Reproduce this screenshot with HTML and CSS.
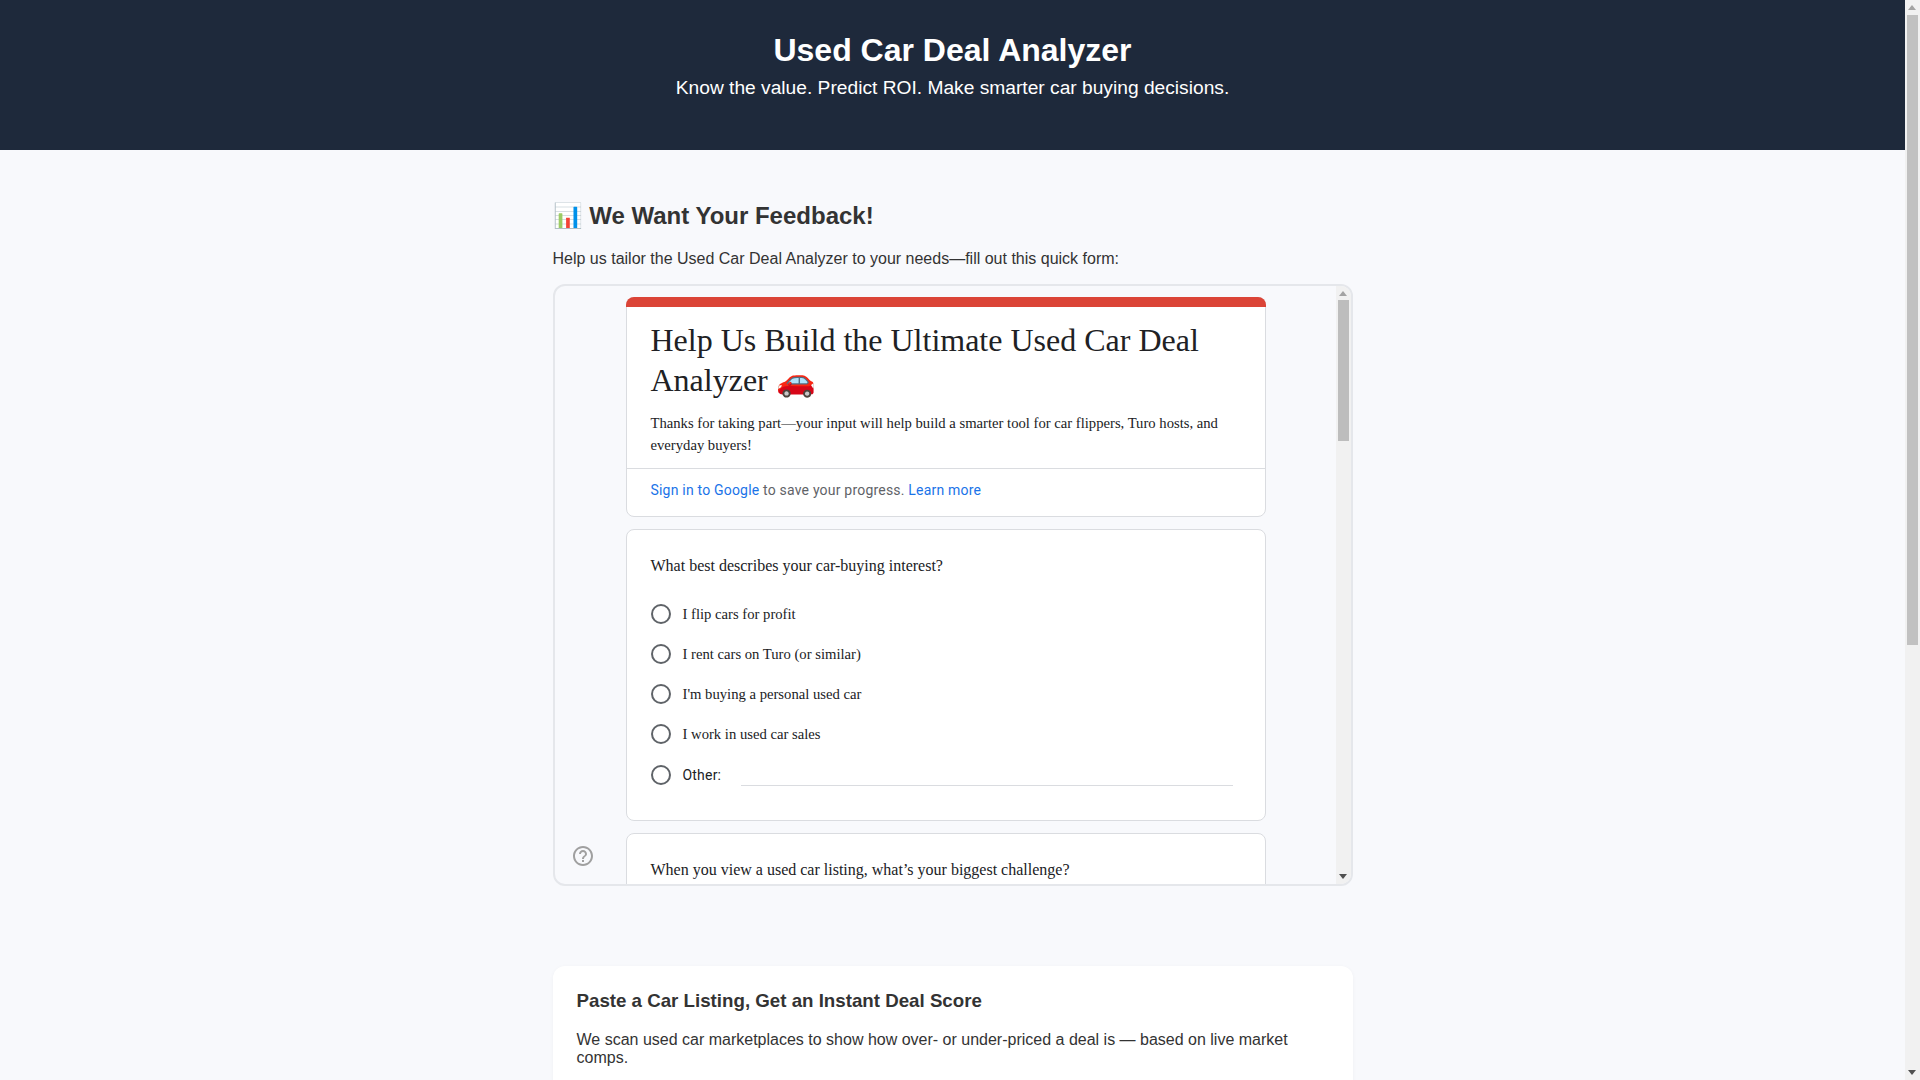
FILE: index.html
```html
<!DOCTYPE html>
<html lang="en">
<head>
  <meta charset="UTF-8">
  <title>Used Car Deal Analyzer</title>
  <link rel="stylesheet" href="styles.css">
</head>
<body>

<header class="hero">
  <h1>Used Car Deal Analyzer</h1>
  <p>Know the value. Predict ROI. Make smarter car buying decisions.</p>
</header>

<main class="content">
  <section class="feedback">
    <h2>📊 We Want Your Feedback!</h2>
    <p>Help us tailor the Used Car Deal Analyzer to your needs—fill out this quick form:</p>

    <div class="form-frame">
      <div class="form-scroll">
        <div class="form-card form-head">
          <div class="form-strip"></div>
          <div class="form-intro">
            <h3>Help Us Build the Ultimate Used Car Deal Analyzer 🚗</h3>
            <p>Thanks for taking part—your input will help build a smarter tool for car flippers, Turo hosts, and everyday buyers!</p>
          </div>
          <div class="form-signin"><a href="#">Sign in to Google</a> to save your progress. <a href="#">Learn more</a></div>
        </div>

        <div class="form-card question">
          <div class="q-title">What best describes your car-buying interest?</div>
          <label class="option"><span class="radio"></span>I flip cars for profit</label>
          <label class="option"><span class="radio"></span>I rent cars on Turo (or similar)</label>
          <label class="option"><span class="radio"></span>I'm buying a personal used car</label>
          <label class="option"><span class="radio"></span>I work in used car sales</label>
          <label class="option option-other"><span class="radio"></span><span class="other-label">Other:</span><span class="other-line"></span></label>
        </div>

        <div class="form-card question question-long">
          <div class="q-title">When you view a used car listing, what’s your biggest challenge?</div>
        </div>
      </div>

      <svg class="help-icon" viewBox="0 0 24 24" width="24" height="24"><path d="M11 18h2v-2h-2v2zm1-16C6.48 2 2 6.48 2 12s4.48 10 10 10 10-4.48 10-10S17.52 2 12 2zm0 18c-4.41 0-8-3.59-8-8s3.59-8 8-8 8 3.59 8 8-3.59 8-8 8zm0-14c-2.21 0-4 1.79-4 4h2c0-1.1.9-2 2-2s2 .9 2 2c0 2-3 1.75-3 5h2c0-2.25 3-2.5 3-5 0-2.21-1.79-4-4-4z"/></svg>

      <div class="scrollbar frame-bar">
        <span class="arrow-up"></span>
        <span class="thumb"></span>
        <span class="arrow-down"></span>
      </div>
    </div>
  </section>

  <section class="score-card">
    <h3>Paste a Car Listing, Get an Instant Deal Score</h3>
    <p>We scan used car marketplaces to show how over- or under-priced a deal is — based on live market comps.</p>
  </section>
</main>

<div class="scrollbar page-bar">
  <span class="arrow-up"></span>
  <span class="thumb"></span>
  <span class="arrow-down"></span>
</div>

</body>
</html>
```

FILE: styles.css
```css
* { box-sizing: border-box; }
body {
  margin: 0;
  padding-right: 15px;
  font-family: "Liberation Sans", Arial, sans-serif;
  background-color: #f8f9fc;
  color: #333;
}

.hero {
  height: 150px;
  padding-top: 32px;
  background-color: #1e293b;
  color: #fff;
  text-align: center;
}
.hero h1 { margin: 0; font-size: 32px; line-height: 36px; }
.hero p { margin: 9px 0 0; font-size: 19.2px; line-height: 22px; }

.content {
  width: 800px;
  margin: 0 auto;
  padding-top: 50px;
  padding-bottom: 40px;
}

.feedback h2 { margin: 0; font-size: 24px; line-height: 32px; }
.feedback > p { margin: 18px 0 16px; font-size: 16px; line-height: 18px; }

.form-frame {
  position: relative;
  height: 602px;
  border: 2px solid #e5e7eb;
  border-radius: 12px;
  overflow: hidden;
}
.form-scroll {
  height: 100%;
  overflow: hidden;
  padding: 11px 0 12px 71px;
  font-family: "Liberation Serif", "Times New Roman", serif;
  color: #202124;
}
.help-icon {
  position: absolute;
  left: 16px;
  bottom: 16px;
  fill: #a0a0a0;
}

/* the browser hides native bars, so both are drawn */
.scrollbar {
  width: 15px;
  background: #f1f1f1;
}
.page-bar { position: fixed; top: 0; right: 0; bottom: 0; }
.frame-bar { position: absolute; top: 0; right: 0; bottom: 0; }
.thumb {
  position: absolute;
  left: 2px;
  width: 11px;
  background: #c1c1c1;
}
.page-bar .thumb { top: 15px; height: 630px; }
.frame-bar .thumb { top: 14px; height: 141px; background: #bdbdbd; }
.arrow-up, .arrow-down {
  position: absolute;
  left: 3px;
  width: 0;
  height: 0;
  border-left: 4.5px solid transparent;
  border-right: 4.5px solid transparent;
}
.arrow-up { top: 5px; border-bottom: 5px solid #a3a3a3; }
.arrow-down { bottom: 5px; border-top: 5px solid #505050; }

.form-card {
  width: 640px;
  margin-bottom: 12px;
  background: #fff;
  border: 1px solid #dadce0;
  border-radius: 8px;
}
.form-strip {
  height: 10px;
  margin: -1px -1px 0;
  background: #db4437;
  border-radius: 8px 8px 0 0;
}
.form-intro { padding: 13px 24px 12px; border-bottom: 1px solid #dadce0; }
.form-intro h3 { margin: 0; font-size: 32px; line-height: 40px; font-weight: 400; }
.form-intro p { margin: 12px 0 0; font-size: 14.67px; line-height: 22px; }
.form-signin {
  height: 47px;
  padding: 0 24px;
  font-family: Roboto, Arial, sans-serif;
  font-size: 14px;
  line-height: 43px;
  letter-spacing: .2px;
  color: #5f6368;
}
.form-signin a { color: #1a73e8; text-decoration: none; }

.question { padding: 24px 24px 0; height: 292px; }
.question-long { height: 1480px; }
.q-title { font-size: 16px; line-height: 24px; margin-bottom: 16px; }
.option {
  display: flex;
  align-items: center;
  height: 40px;
  font-size: 14.67px;
}
.radio {
  width: 20px;
  height: 20px;
  margin-right: 12px;
  border: 2px solid #5f6368;
  border-radius: 50%;
  flex: none;
}
.option-other { margin-top: 1px; }
.other-label { font-family: Roboto, Arial, sans-serif; font-size: 14px; letter-spacing: .2px; }
.other-line {
  align-self: flex-end;
  width: 492px;
  height: 1px;
  margin-left: auto;
  margin-right: 8px;
  margin-bottom: 9px;
  background: #dadce0;
}

.score-card {
  min-height: 700px;
  margin-top: 80px;
  padding: 24px;
  background: #fff;
  border-radius: 12px;
  box-shadow: 0 1px 4px rgba(0, 0, 0, 0.04);
}
.score-card h3 { margin: 0; font-size: 18.72px; line-height: 22px; }
.score-card p { margin: 19px 0 0; font-size: 16px; line-height: 18px; }
```
